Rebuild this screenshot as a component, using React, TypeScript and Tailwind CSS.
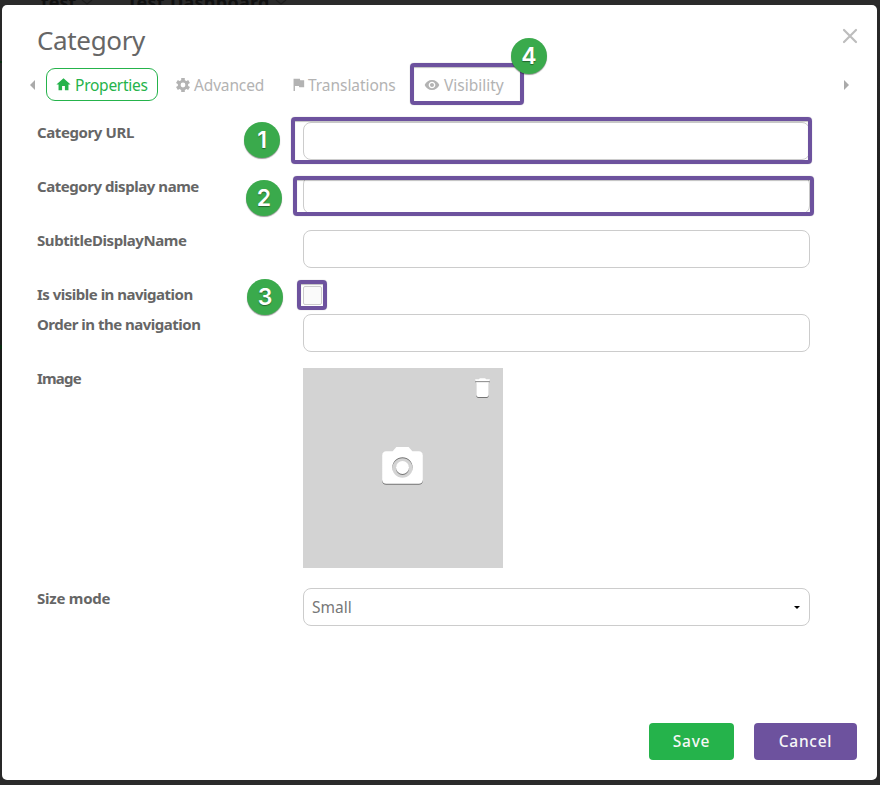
import { MdCameraAlt, MdDelete, MdFlag, MdHome, MdVisibility } from 'react-icons/md';

const font = "font-['Noto_Sans','Open_Sans',sans-serif]";

function Label({ text, tracking }: { text: string; tracking: string }) {
  return (
    <label className={`w-[266px] shrink-0 whitespace-nowrap text-[15px] font-bold leading-[20px] text-[#666] ${tracking}`}>
      {text}
    </label>
  );
}

function Field() {
  return <input className="h-[38px] w-[507px] rounded-lg border border-[#ccc] bg-white outline-none" />;
}

function Gear() {
  return (
    <svg width="14" height="14" viewBox="-7 -7 14 14" fill="currentColor">
      {[0, 60, 120].map((angle) => (
        <rect key={angle} x="-1.8" y="-7" width="3.6" height="3.4" transform={`rotate(${angle})`} />
      ))}
      {[180, 240, 300].map((angle) => (
        <rect key={angle} x="-1.8" y="-7" width="3.6" height="3.4" transform={`rotate(${angle})`} />
      ))}
      <circle r="3.8" fill="none" stroke="currentColor" strokeWidth="2.8" />
    </svg>
  );
}

function Step({ n, place }: { n: number; place: string }) {
  return (
    <div
      className={`absolute flex size-9 items-center justify-center rounded-full bg-[#3aaa4c] font-['Inter',sans-serif] text-[23px] font-semibold leading-none text-white shadow-[0_1px_1px_rgba(0,0,0,0.4)] [text-shadow:0_1px_1px_rgba(0,0,0,0.4)] ${place}`}
    >
      {n}
    </div>
  );
}

function Outline({ place }: { place: string }) {
  return (
    <div
      className={`pointer-events-none absolute rounded-[4px] border-4 border-[#6d529e] shadow-[0_0_1px_rgba(0,0,0,0.4),inset_0_1px_1px_rgba(0,0,0,0.25)] ${place}`}
    />
  );
}

export default function App() {
  return (
    <div className={`relative h-[785px] w-[880px] overflow-hidden bg-gradient-to-b from-[#292929] via-[#191919] to-[#292929] ${font}`}>
      <div className="absolute left-0 top-0 h-[5px] w-full overflow-hidden bg-[#2b2b2b] text-[18px] font-bold leading-[24px] text-[#111]">
        <span className="absolute -top-[10px] left-[41px]">test</span>
        <span className="absolute -top-[10px] left-[127px] tracking-[0.3px]">Test Dashboard</span>
        <svg className="absolute left-[80px] top-0" width="14" height="5" fill="none" stroke="#1d1d1d" strokeWidth="1.2">
          <path d="M2 0l5 4 5-4" />
        </svg>
        <svg className="absolute left-[274px] top-0" width="14" height="5" fill="none" stroke="#1d1d1d" strokeWidth="1.2">
          <path d="M2 0l5 4 5-4" />
        </svg>
      </div>
      <div className="absolute bottom-0 left-0 h-[5px] w-full bg-[#2b2b2b]" />
      <div className="absolute left-0 top-[61px] h-[2px] w-[2px] bg-[#092b10]" />
      <div className="absolute left-0 top-[345px] h-[4px] w-[2px] bg-[#092b10]" />

      <main className="relative ml-[2px] mt-[5px] flex h-[775px] w-[875px] flex-col rounded-[5px] bg-white pl-[35px]">
        <header className="flex h-[63px] justify-between pr-[19px] pt-[17px]">
          <h1 className="-mt-px text-[26px] font-normal leading-[38px] tracking-[-0.35px] text-[#666]">Category</h1>
          <svg className="mt-[6px]" width="16" height="16" fill="none" stroke="#bdbdbd" strokeWidth="2.2" strokeLinecap="round">
            <path d="M2 2l12 12M14 2L2 14" />
          </svg>
        </header>

        <nav className="-ml-[8px] flex h-[33px] items-center text-[15.5px] leading-[20px] text-[#b3b3b3]">
          <svg width="6" height="10" fill="#aaa"><path d="M6 0v10L1 5z" /></svg>
          <div className="ml-[11px] flex h-[33px] w-[112px] items-center rounded-[9px] border border-[#25b34b] pl-[8px] text-[#25b34b]">
            <MdHome size={17} />
            <span className="ml-[3px] whitespace-nowrap tracking-[-0.25px]">Properties</span>
          </div>
          <div className="ml-[18px] flex w-[116px] items-center">
            <Gear />
            <span className="ml-[4px] whitespace-nowrap tracking-[-0.15px]">Advanced</span>
          </div>
          <div className="flex w-[132px] items-center">
            <MdFlag size={17} className="-ml-[2px]" />
            <span className="ml-[1px] whitespace-nowrap tracking-[-0.05px]">Translations</span>
          </div>
          <div className="flex items-center">
            <MdVisibility size={16} />
            <span className="ml-[4px] whitespace-nowrap">Visibility</span>
          </div>
          <svg className="ml-auto mr-[27px]" width="6" height="10" fill="#aaa"><path d="M0 0v10l5-5z" /></svg>
        </nav>

        <section className="mt-[21px] flex flex-col">
          <div className="flex h-[54px]"><Label text="Category URL" tracking="tracking-[-0.4px]" /><Field /></div>
          <div className="flex h-[54px]"><Label text="Category display name" tracking="tracking-[-0.45px]" /><Field /></div>
          <div className="flex h-[54px]"><Label text="SubtitleDisplayName" tracking="tracking-[-0.43px]" /><Field /></div>
          <div className="flex h-[30px]">
            <Label text="Is visible in navigation" tracking="tracking-[-0.5px]" />
            <span className="mt-[2px] size-[19px] rounded-[2px] border border-[#ccc] bg-[#fafafa]" />
          </div>
          <div className="flex h-[54px]"><Label text="Order in the navigation" tracking="tracking-[-0.5px]" /><Field /></div>
          <div className="flex h-[220px]">
            <Label text="Image" tracking="tracking-[-0.8px]" />
            <div className="relative flex size-[200px] items-center justify-center bg-[#d3d3d3] pb-px pr-px text-white">
              <MdCameraAlt size={49} className="[filter:drop-shadow(0.5px_1px_0.5px_rgba(0,0,0,0.45))]" />
              <MdDelete size={25} className="absolute right-[8px] top-[7px] [filter:drop-shadow(0.5px_1px_0.5px_rgba(0,0,0,0.45))]" />
            </div>
          </div>
          <div className="flex h-[38px]">
            <Label text="Size mode" tracking="tracking-[-0.25px]" />
            <div className="flex w-[507px] items-center justify-between rounded-lg border border-[#ccc] pl-[8px] pr-[9px] text-[15.5px] text-[#777]">
              <span className="mt-[2px]">Small</span>
              <svg width="6" height="3" fill="#000"><path d="M0 0h6L3 3z" /></svg>
            </div>
          </div>
        </section>

        <footer className="mb-[20px] mr-[20px] mt-auto flex justify-end gap-[20px] text-[15.5px] font-medium tracking-[0.75px] text-[#f7f7f7]">
          <button className="h-[37px] w-[85px] rounded-[4px] bg-[#25b34b]">Save</button>
          <button className="h-[37px] w-[103px] rounded-[4px] bg-[#6d529e]">Cancel</button>
        </footer>
      </main>

      <Outline place="left-[291px] top-[117px] h-[47px] w-[521px]" />
      <Outline place="left-[293px] top-[176px] h-[40px] w-[521px]" />
      <Outline place="left-[297px] top-[280px] h-[30px] w-[30px]" />
      <Outline place="left-[410px] top-[63px] h-[42px] w-[114px]" />
      <Step n={1} place="left-[244px] top-[122px]" />
      <Step n={2} place="left-[246px] top-[180px]" />
      <Step n={3} place="left-[247px] top-[279px]" />
      <Step n={4} place="left-[511px] top-[38px]" />
    </div>
  );
}
